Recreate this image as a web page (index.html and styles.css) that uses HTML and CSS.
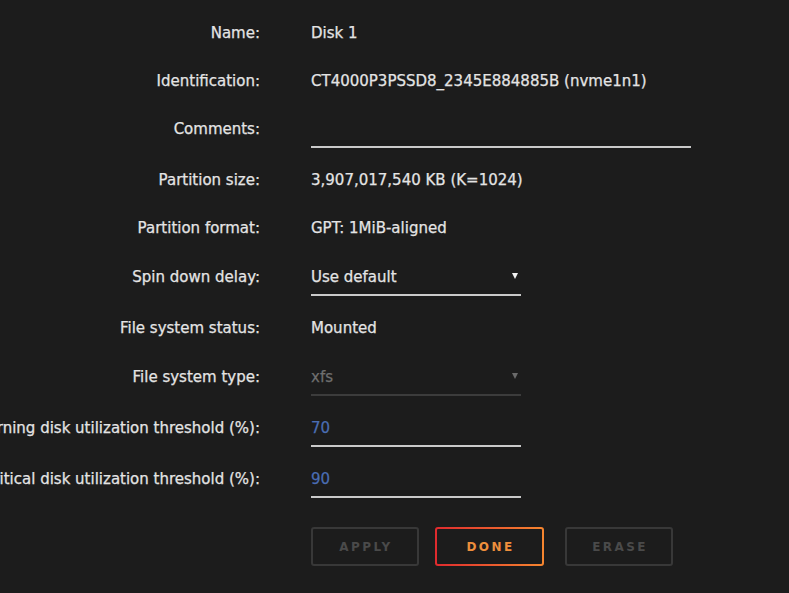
FILE: index.html
```html
<!DOCTYPE html>
<html lang="en">
<head>
<meta charset="utf-8">
<title>Disk 1 Settings</title>
<link rel="stylesheet" href="styles.css">
</head>
<body>
<form class="settings">
  <div class="row"><div class="label">Name:</div><div class="value">Disk 1</div></div>
  <div class="row"><div class="label">Identification:</div><div class="value">CT4000P3PSSD8_2345E884885B (nvme1n1)</div></div>
  <div class="row row--field"><div class="label">Comments:</div><div class="value"><div class="input input--wide">&nbsp;</div></div></div>
  <div class="row"><div class="label">Partition size:</div><div class="value">3,907,017,540 KB (K=1024)</div></div>
  <div class="row row--loose"><div class="label">Partition format:</div><div class="value">GPT: 1MiB-aligned</div></div>
  <div class="row row--field"><div class="label">Spin down delay:</div><div class="value"><div class="input select">Use default<span class="caret"></span></div></div></div>
  <div class="row row--loose"><div class="label">File system status:</div><div class="value">Mounted</div></div>
  <div class="row row--field"><div class="label">File system type:</div><div class="value"><div class="input select disabled">xfs<span class="caret"></span></div></div></div>
  <div class="row row--field"><div class="label">Warning disk utilization threshold (%):</div><div class="value"><div class="input number">70</div></div></div>
  <div class="row row--field"><div class="label">Critical disk utilization threshold (%):</div><div class="value"><div class="input number">90</div></div></div>
  <div class="buttons">
    <button type="button" class="btn btn--off">APPLY</button>
    <button type="button" class="btn btn--primary">DONE</button>
    <button type="button" class="btn btn--off btn--last">ERASE</button>
  </div>
</form>
</body>
</html>
```
FILE: styles.css
```css
html, body {
  margin: 0;
  padding: 0;
  background: #1c1c1c;
  height: 100%;
  overflow: hidden;
}
body {
  font-family: "DejaVu Sans", "Noto Sans", sans-serif;
  font-size: 15px;
  color: #e4e4e4;
  -webkit-text-stroke: 0.25px currentColor;
}
.settings {
  padding-top: 23px;
}
.row {
  display: flex;
  height: 48px;
}
.row--loose {
  height: 49px;
}
.row--field {
  height: 51px;
}
.label {
  width: 260px;
  flex: none;
  display: flex;
  justify-content: flex-end;
  white-space: nowrap;
  line-height: 20px;
  height: 20px;
}
.value {
  margin-left: 51px;
  line-height: 20px;
  white-space: nowrap;
}
.input {
  position: relative;
  width: 210px;
  padding-bottom: 7px;
  border-bottom: 2px solid #c9c9c9;
  line-height: 20px;
}
.input--wide {
  width: 380px;
}
.number {
  color: #4a6db3;
}
.select.disabled {
  color: #6f6f6f;
  border-bottom-color: #3c3c3c;
}
.caret {
  position: absolute;
  right: 3px;
  top: 6px;
  width: 0;
  height: 0;
  border-left: 3.5px solid transparent;
  border-right: 3.5px solid transparent;
  border-top: 6px solid #f2f2f2;
}
.disabled .caret {
  border-top-color: #6a6a6a;
}
.buttons {
  display: flex;
  gap: 16px;
  margin-left: 311px;
  margin-top: 7px;
}
.btn {
  width: 108px;
  height: 39px;
  border-radius: 3px;
  background: transparent;
  border: 2px solid #383838;
  color: #4a4a4a;
  font-family: "DejaVu Sans", "Noto Sans", sans-serif;
  font-weight: 700;
  font-size: 12px;
  letter-spacing: 2.4px;
  padding: 0 0 0 2px;
  -webkit-text-stroke: 0;
}
.btn--primary {
  width: 109px;
  border: 2px solid transparent;
  background: linear-gradient(#1c1c1c, #1c1c1c) padding-box, linear-gradient(90deg, #df2a2e, #f6862f) border-box;
  color: #ee8f3c;
}
.btn--last {
  margin-left: 5px;
}
```
